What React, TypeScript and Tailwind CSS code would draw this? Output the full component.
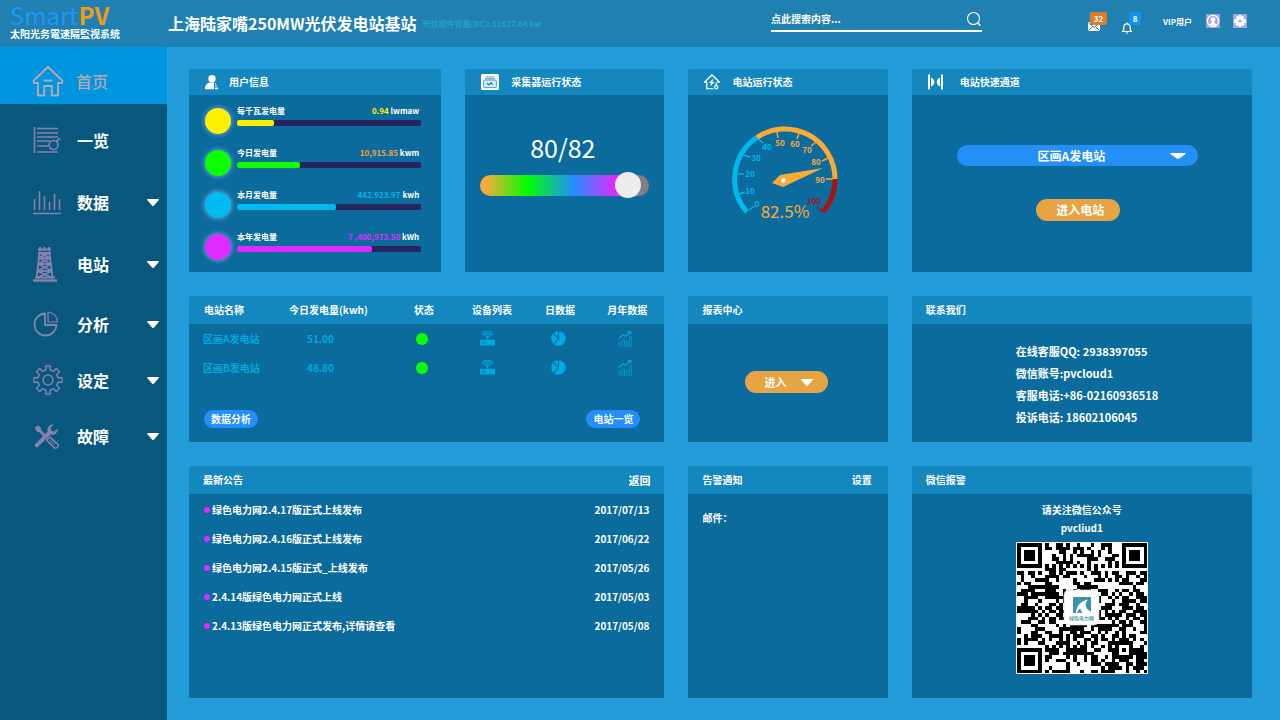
import { useState } from 'react';
import type { ReactNode } from 'react';

type IconProps = { className?: string };

function Caret({ className = '' }: IconProps) {
  return (
    <svg viewBox="0 0 12 7" preserveAspectRatio="none" className={`fill-current ${className}`} aria-hidden="true">
      <path d="M0 .8Q0 0 1 0h10Q12 0 12 .8L7 6.4Q6 7.4 5 6.4z" />
    </svg>
  );
}

function HomeIcon() {
  return (
    <svg viewBox="0 0 32 32" className="h-8 w-8" fill="none" stroke="currentColor" strokeWidth="2" strokeLinejoin="round">
      <path d="M6 18H1.8v-2.6L16 2l14.2 13.4V18H26v12.6h-6.2V21h-7.6v9.6H6z" />
      <path d="M12.5 15.5h7" strokeLinecap="round" />
    </svg>
  );
}

function ListIcon() {
  return (
    <svg viewBox="0 0 28 28" className="h-7 w-7" fill="none" stroke="currentColor" strokeWidth="1.6">
      <path d="M1.5 1v26M4 2.5h21M4 7h21M4 11h21M4 15h13M4 20h11M4 26h21" />
      <circle cx="20.5" cy="19" r="4.5" />
      <path d="M23.5 15.5l3.2-3" strokeWidth="2.2" />
    </svg>
  );
}

function BarsIcon() {
  return (
    <svg viewBox="0 0 28 26" className="h-[26px] w-7" fill="none" stroke="currentColor" strokeWidth="1.6">
      <path d="M1.5 10v11M6.5 2v19M11.5 7v14M16.5 13v8M21.5 5v16M26.5 10v11" />
      <path d="M0 24.5h28" />
    </svg>
  );
}

function TowerIcon() {
  return (
    <svg viewBox="0 0 24 36" className="h-9 w-6" fill="none" stroke="currentColor" strokeWidth="1.8">
      <path d="M5 3.5h13M7 1v4M11.5 1v4M16 1v4" strokeWidth="2" />
      <path d="M5 7h13" strokeWidth="2.4" />
      <path d="M6.5 7L3.6 32M16.5 7L19.6 32M5.6 12h12M5 18h13.4M4.4 25h15" />
      <path d="M6.5 7l11 5M16.5 7l-11 5M5.6 12l12.6 6M17.6 12L5 18M5 18l14 7M18.3 18L4.3 25M4.3 25l15.3 7M19.3 25L3.6 32" />
      <path d="M2 31.5h20" strokeWidth="2" />
      <path d="M0 34.5h24" strokeWidth="2.4" />
    </svg>
  );
}

function PieIcon() {
  return (
    <svg viewBox="0 0 26 26" className="h-[26px] w-[26px]" fill="none" stroke="currentColor" strokeWidth="1.8">
      <path d="M12 2.5A11 11 0 1 0 23.5 14H12z" />
      <path d="M15 1.2A10 10 0 0 1 24.6 11H15z" strokeWidth="1.2" />
    </svg>
  );
}

function GearIcon() {
  return (
    <svg viewBox="0 0 30 30" className="h-[30px] w-[30px]" fill="none" stroke="currentColor" strokeWidth="1.4">
      <path d="M12.8 1h4.4v4l3.2 1.3 2.9-2.8 3.2 3.2-2.8 2.9L25 12.8h4v4.4h-4l-1.3 3.2 2.8 2.9-3.2 3.2-2.9-2.8-3.2 1.3v4h-4.4v-4l-3.2-1.3-2.9 2.8-3.2-3.2 2.8-2.9L5 17.2H1v-4.4h4l1.3-3.2-2.8-2.9 3.2-3.2 2.9 2.8L12.8 5z" />
      <circle cx="15" cy="15" r="5" />
    </svg>
  );
}

function ToolsIcon() {
  return (
    <svg viewBox="0 0 26 26" className="h-[26px] w-[26px]" fill="none" stroke="currentColor">
      <path d="M20.8 1.6a5.2 5.2 0 0 0-6 7L2 21.2a2 2 0 0 0 2.8 2.8L17.6 11.4a5.2 5.2 0 0 0 7-6l-3.4 3-3-.6-.6-3z" fill="currentColor" stroke="none" />
      <path d="M1.6 4.8L5 2.2l3 2.6.2 2.4 5 5-2 2-5-5-2.2-.4z" fill="currentColor" stroke="none" />
      <path d="M13.6 17.2l3.2-3.2 7.6 6.8a2.3 2.3 0 0 1-3.4 3.6z" strokeWidth="1.5" />
      <path d="M16.5 17l5 5M18.2 16l4.6 4.4" strokeWidth="1" />
    </svg>
  );
}

function UserIcon() {
  return (
    <svg viewBox="0 0 14 15" className="h-[15px] w-3.5 fill-current">
      <circle cx="7" cy="3.8" r="3.7" />
      <path d="M0 14.2C0 10.4 2 8 5 7.6h4v6.6z" />
      <path d="M10 8.2h1v1h-1zM10 10.3h2v1h-2zM10 12.6h3.2v1.6H10z" />
    </svg>
  );
}

function CollectorIcon() {
  return (
    <svg viewBox="0 0 18 16" className="h-4 w-[18px]">
      <rect width="18" height="16" rx="1.6" fill="#fff" />
      <path d="M5 3h8M4 4.8h10" stroke="#4d9cc4" strokeWidth="1" />
      <rect x="2.6" y="6" width="12.8" height="7.6" rx="1.2" fill="#d7ebf5" stroke="#4d9cc4" />
      <path d="M6 9l2 2 2-2.4 1.6 2" fill="none" stroke="#1273a5" strokeWidth="1.1" />
    </svg>
  );
}

function StationIcon() {
  return (
    <svg viewBox="0 0 16 16" className="h-4 w-4" fill="none" stroke="currentColor" strokeWidth="1.3">
      <path d="M2.8 8H.8L8 1l7.2 7h-2M2.8 8v6.6h6.4" />
      <path d="M9.4 4.6L5 9h2.2l-1.2 3.6L10.8 8H8.4z" fill="currentColor" stroke="none" />
      <path d="M12.2 8.6v3.2" />
      <circle cx="12.2" cy="13.2" r="1.6" />
    </svg>
  );
}

function ChannelIcon() {
  return (
    <svg viewBox="0 0 15 16" className="h-4 w-[15px] fill-current">
      <path d="M0 .5h2v15H0zM13 .5h2v15h-2zM3 3.4c1.7.8 3.4 2.6 3.4 4.6s-1.7 3.8-3.4 4.6zM12 3.4C10 4.2 8.8 6 8.8 8s1.2 3.8 3.2 4.6z" />
    </svg>
  );
}

function RouterIcon() {
  return (
    <svg viewBox="0 0 15 15" className="h-[15px] w-[15px]" fill="none" stroke="currentColor" strokeWidth="1.2">
      <path d="M0 8.8h15v5.7H0z" fill="currentColor" stroke="none" />
      <path d="M1.8 11.6h1.2M4 11.6h1.2" stroke="#0c6b9d" strokeWidth="1.3" />
      <path d="M7.5 9V5M5.3 6.2a2.4 2.4 0 0 1 4.4 0M3.6 5a4.2 4.2 0 0 1 7.8 0M2 3.8a6 6 0 0 1 11 0" />
    </svg>
  );
}

function PieSolidIcon() {
  return (
    <svg viewBox="0 0 15 15" className="h-[15px] w-[15px]">
      <circle cx="7.5" cy="7.5" r="7.3" fill="currentColor" />
      <path d="M7.5 0v7.5L2.2 2.4M7.5 7.5L3 13" fill="none" stroke="#0c6b9d" strokeWidth="1.1" />
    </svg>
  );
}

function TrendIcon() {
  return (
    <svg viewBox="0 0 14 16" className="h-4 w-3.5" fill="none" stroke="currentColor" strokeWidth=".8">
      <path d="M1 7.5L5 3.5l2.4 2L12.6.8M9.8.7h3v2.6" strokeWidth="1.2" />
      <path d="M.8 16v-4.5h2V16M4.6 16V9h2v7M8 16v-5.5h2V16M11.4 16V5.5h2V16" opacity=".75" />
    </svg>
  );
}

const menu = [
  { label: '一览', icon: <ListIcon />, sub: false, space: 'mt-2' },
  { label: '数据', icon: <BarsIcon />, sub: true, space: 'mt-1.5' },
  { label: '电站', icon: <TowerIcon />, sub: true, space: 'mt-1.5' },
  { label: '分析', icon: <PieIcon />, sub: true, space: 'mt-1' },
  { label: '设定', icon: <GearIcon />, sub: true, space: '' },
  { label: '故障', icon: <ToolsIcon />, sub: true, space: '' },
];

const energy = [
  { label: '每千瓦发电量', value: '0.94', unit: 'lwmaw', percent: 20, bg: 'bg-[#fff000]', text: 'text-[#fff000]' },
  { label: '今日发电量', value: '10,915.85', unit: 'kwm', percent: 34, bg: 'bg-[#0cff00]', text: 'text-[#f2a23c]' },
  { label: '本月发电量', value: '442.923.97', unit: 'kwh', percent: 54, bg: 'bg-[#00bbf2]', text: 'text-[#00b4ea]' },
  { label: '本年发电量', value: '7 ,400,973.50', unit: 'kWh', percent: 73, bg: 'bg-[#df2bff]', text: 'text-[#df2bff]' },
];

const stations = [
  { name: '区画A发电站', today: '51.00' },
  { name: '区画B发电站', today: '48.80' },
];

const news = [
  { title: '绿色电力网2.4.17版正式上线发布', date: '2017/07/13' },
  { title: '绿色电力网2.4.16版正式上线发布', date: '2017/06/22' },
  { title: '绿色电力网2.4.15版正式_上线发布', date: '2017/05/26' },
  { title: '2.4.14版绿色电力网正式上线', date: '2017/05/03' },
  { title: '2.4.13版绿色电力网正式发布,详情请查看', date: '2017/05/08' },
];

type PanelProps = {
  title: string;
  icon?: ReactNode;
  iconBox?: string;
  action?: ReactNode;
  className?: string;
  children?: ReactNode;
};

function Panel({ title, icon, iconBox = '', action, className = '', children }: PanelProps) {
  return (
    <section className={`flex flex-col overflow-hidden rounded-t-[4px] bg-[#0c6b9d] ${className}`}>
      <header className={`flex items-center bg-[#1487bf] ${icon ? 'h-[26px] pl-4' : 'h-7 px-3.5'}`}>
        {icon && <span className={`flex shrink-0 ${iconBox}`}>{icon}</span>}
        <h2 className="font-bold text-[10px] leading-4">{title}</h2>
        {action}
      </header>
      {children}
    </section>
  );
}

const BLUE = '#00b7ee';
const ORANGE = '#fbab35';
const RED = '#a81510';

const ticks = [
  { n: 0, x: -28, y: 25, line: 'M-36 31L-30 27', color: BLUE },
  { n: 10, x: -35, y: 12, line: 'M-46 15L-40 13', color: BLUE },
  { n: 20, x: -35, y: -5, line: 'M-47 -5L-41 -5', color: BLUE },
  { n: 30, x: -29, y: -21, line: 'M-42 -24L-35 -22', color: BLUE },
  { n: 40, x: -18, y: -32, line: 'M-27 -40L-22 -36', color: BLUE },
  { n: 50, x: -5, y: -36, line: 'M-8 -47L-7 -41', color: ORANGE },
  { n: 60, x: 10, y: -35, line: 'M14 -46L12 -40', color: ORANGE },
  { n: 70, x: 22, y: -29, line: 'M31 -37L26 -33', color: ORANGE },
  { n: 80, x: 31, y: -17, line: 'M43 -21L37 -18', color: ORANGE },
  { n: 90, x: 35, y: 1, line: 'M48 0L41 0', color: ORANGE },
  { n: 100, x: 29, y: 22, line: 'M32 28L38 33', color: RED },
];

function Gauge() {
  return (
    <svg viewBox="-56 -56 112 100" className="h-[100px] w-28" role="img" aria-label="82.5%">
      <g fill="none" strokeWidth="5">
        <path d="M-38 33A50 50 0 0 1 -28 -41.5" stroke={BLUE} />
        <path d="M-28 -41.5A50 50 0 0 1 50 0" stroke={ORANGE} />
        <path d="M50 0A50 50 0 0 1 38 33" stroke={RED} />
      </g>
      {ticks.map((t) => (
        <g key={t.n}>
          <path d={t.line} stroke={t.color} strokeWidth="1.4" />
          <text x={t.x} y={t.y + 3} fill={t.color} textAnchor="middle" className="font-bold text-[8px]">
            {t.n}
          </text>
        </g>
      ))}
      <path d="M-13 4L-5 -4L38 -11L-2 8z" fill={ORANGE} />
      <circle cx="-1.5" cy="1.5" r="2.2" fill="#fff" />
      <text x="0" y="39" fill={ORANGE} textAnchor="middle" className="text-[17px]">
        82.5%
      </text>
    </svg>
  );
}

const SIZE = 37;

// value of a module inside a finder square, or null when outside of all three
function finder(x: number, y: number) {
  const corners = [[0, 0], [SIZE - 7, 0], [0, SIZE - 7]];
  for (const [cx, cy] of corners) {
    const d = Math.max(Math.abs(x - cx - 3), Math.abs(y - cy - 3));
    if (d <= 4) return d !== 2 && d !== 4;
  }
  return null;
}

function qrPath() {
  let seed = 20170713;
  let d = '';
  for (let y = 0; y < SIZE; y++) {
    for (let x = 0; x < SIZE; x++) {
      seed = (seed * 48271) % 2147483647;
      let on = (seed >> 8) % 100 < 51;
      const align = Math.max(Math.abs(x - 30), Math.abs(y - 30));
      if (align <= 2) on = align !== 1;
      if (x === 6 || y === 6) on = (x + y) % 2 === 0;
      on = finder(x, y) ?? on;
      if (on) d += `M${x} ${y}h1v1h-1z`;
    }
  }
  return d;
}

const qr = qrPath();

function QrCode() {
  return (
    <svg viewBox="0 0 132 132" className="mt-1 h-[132px] w-[132px]" role="img" aria-label="微信公众号二维码">
      <rect width="132" height="132" fill="#fff" />
      <path d={qr} transform="translate(1 1) scale(3.514)" fill="#000" shapeRendering="crispEdges" />
      <rect x="48" y="48" width="35" height="35" rx="5" fill="#fff" stroke="#d5dadd" strokeWidth=".7" />
      <rect x="57" y="55" width="18" height="16" fill="#3d93a8" />
      <path d="M60 71c0-7 5-12 12-13.5l-1.5 2c-2 4 0 8.5 4.5 10v1.5H67c-1.5-1-2.5-2.5-2.5-4.500-2 1-3 2.500-3.200 4.500z" fill="#fff" />
      <text x="65.5" y="78" textAnchor="middle" fill="#5d9fb2" className="font-bold text-[5px]">
        绿色电力网
      </text>
    </svg>
  );
}

function TopBar() {
  return (
    <header className="flex h-[47px] items-center bg-[#2080b2] pr-[33px]">
      <div className="w-[168px] shrink-0 pb-1 pl-2.5">
        <p className="text-2xl leading-6 text-[#1a9af5]">
          Smart<span className="font-bold text-[#f39a14]">PV</span>
        </p>
        <p className="whitespace-nowrap font-bold text-[10px] leading-[14px]">太阳光务電速隔監视系统</p>
      </div>
      <h1 className="mb-0.5 whitespace-nowrap font-bold text-base">上海陆家嘴250MW光伏发电站基站</h1>
      <span className="ml-1.5 whitespace-nowrap font-bold text-[8px] text-[#24a2cb]">光伏组件容量(DC): 11627.64 kw</span>
      <label className="mb-2 ml-auto flex h-6 w-[211px] items-center border-b-2 border-white">
        <input
          type="search"
          aria-label="搜索"
          placeholder="点此搜索内容..."
          className="min-w-0 flex-1 bg-transparent font-bold text-[10px] leading-4 outline-none placeholder:text-white placeholder:opacity-100"
        />
        <svg viewBox="0 0 16 16" className="h-4 w-4" fill="none" stroke="currentColor" strokeWidth="1.1">
          <circle cx="7.5" cy="7.5" r="6" />
          <path d="M11.8 11.8l2.4 2.6" strokeWidth="1.5" />
        </svg>
      </label>
      <div className="mb-1 ml-[106px] flex items-center">
        <button className="relative mt-2.5 h-[9px] w-3" aria-label="消息">
          <svg viewBox="0 0 12 9" className="h-[9px] w-3">
            <rect width="12" height="9" rx="1" fill="#fff" />
            <path d="M.5 1L6 5.4 11.5 1M.5 8.5l4-4M11.5 8.5l-4-4" fill="none" stroke="#2080b2" strokeWidth="1" />
          </svg>
          <span className="absolute bottom-1.5 left-0.5 h-[13px] w-[17px] rounded-[2px] bg-[#db7d24] text-center font-bold text-[8px] leading-[13px]">
            32
          </span>
        </button>
        <button className="relative mt-3 ml-[22px] h-3 w-2.5" aria-label="提醒">
          <svg viewBox="0 0 10 12" className="h-3 w-2.5" fill="none" stroke="currentColor" strokeWidth="1.2">
            <path d="M.6 9.5h8.8L8.2 7.8V5A3.2 3.2 0 0 0 1.8 5v2.8zM5 .4v1.4M3.8 11h2.4" />
          </svg>
          <span className="absolute bottom-[9px] left-[7px] h-[13px] w-3 rounded-[2px] bg-[#1493ee] text-center font-bold text-[8px] leading-[13px]">
            8
          </span>
        </button>
        <span className="ml-[31px] whitespace-nowrap font-bold text-[8px]">VIP用户</span>
        <button className="mb-0.5 ml-3.5 h-3.5 w-3.5" aria-label="用户">
          <svg viewBox="0 0 14 14" className="h-3.5 w-3.5">
            <rect width="14" height="14" fill="#a3a6dc" />
            <circle cx="7" cy="7" r="5.6" fill="none" stroke="#fff" strokeWidth="1.3" />
            <path d="M7 3.2a2.4 2.4 0 0 1 1.4 4.4l.2 1.4 2 1.2C9.5 12 4.5 12 3.4 10.2l2-1.2.2-1.4A2.4 2.4 0 0 1 7 3.2z" fill="#fff" />
          </svg>
        </button>
        <button className="mb-0.5 ml-[13px] h-3.5 w-3.5" aria-label="设置">
          <svg viewBox="0 0 14 14" className="h-3.5 w-3.5">
            <rect width="14" height="14" fill="#a3a6dc" />
            <path d="M5.8 1h2.4v1.8l1.3-1.2 2 1.9-1.3 1.5H13v4h-2.2l1 1.5-2 1.9-1.6-1.2V13H5.8v-1.8l-1.6 1.2-2-1.9 1-1.5H1V5h2.8L2.5 3.5l2-1.9 1.3 1.2z" fill="#fff" />
            <circle cx="7" cy="7" r="1.6" fill="#a3a6dc" />
          </svg>
        </button>
      </div>
    </header>
  );
}

function Sidebar() {
  return (
    <nav className="w-[167px] shrink-0 bg-[#09577d]">
      <a href="#home" className="flex h-[57px] items-center bg-[#0095e1] pt-2.5 pl-8 text-[#b3a8ad]">
        <span className="flex w-11">
          <HomeIcon />
        </span>
        <span className="font-medium text-base">首页</span>
      </a>
      {menu.map((item) => (
        <button key={item.label} className={`flex h-14 w-full items-center pr-2 pl-[33px] ${item.space}`}>
          <span className="flex w-11 text-[#8583ae]">{item.icon}</span>
          <span className="font-bold text-base">{item.label}</span>
          {item.sub && <Caret className="ml-auto h-[7px] w-3" />}
        </button>
      ))}
    </nav>
  );
}

export default function App() {
  const [online, setOnline] = useState(94);

  return (
    <div className="flex min-h-screen flex-col bg-[#219cd9] font-['Noto_Sans_CJK_SC','Noto_Sans',sans-serif] text-white">
      <TopBar />
      <div className="flex flex-1">
        <Sidebar />
        <main className="grid min-w-0 flex-1 grid-cols-[252fr_199fr_199fr_340fr] content-start gap-6 pt-[22px] pr-7 pb-5 pl-[22px]">
          <Panel title="用户信息" icon={<UserIcon />} iconBox="w-6" className="min-h-[203px]">
            <ul className="flex flex-col gap-3.5 pt-[11px] pr-5 pl-4">
              {energy.map((e) => (
                <li key={e.label} className="flex h-7 items-start gap-1.5">
                  <span className={`mt-0.5 h-[26px] w-[26px] shrink-0 rounded-full shadow-[0_0_4px_1px_#5f9ccb] ${e.bg}`} />
                  <div className="flex-1">
                    <div className="flex justify-between pr-0.5 font-bold text-[8px] leading-[10px]">
                      <span>{e.label}</span>
                      <span>
                        <span className={e.text}>{e.value}</span> {e.unit}
                      </span>
                    </div>
                    <div className="mt-1 h-1.5 rounded-[2px] bg-[#26245f]">
                      <div className={`h-full rounded-[2px] ${e.bg}`} style={{ width: `${e.percent}%` }} />
                    </div>
                  </div>
                </li>
              ))}
            </ul>
          </Panel>

          <Panel title="采集器运行状态" icon={<CollectorIcon />} iconBox="w-[30px]">
            <div className="flex flex-col items-center px-[15px] pt-9">
              <p className="pr-1 text-[25px] leading-8">80/82</p>
              <input
                type="range"
                aria-label="采集器运行状态"
                value={online}
                onChange={(ev) => setOnline(Number(ev.target.value))}
                className="mt-[9px] h-[26px] w-full appearance-none bg-transparent [&::-webkit-slider-runnable-track]:h-[21px] [&::-webkit-slider-runnable-track]:rounded-full [&::-webkit-slider-runnable-track]:bg-[linear-gradient(90deg,#fba93a_3%,#0f0_28%,#1e90ff_55%,#df2bff_80%,#808080_88%)] [&::-webkit-slider-thumb]:-mt-[3px] [&::-webkit-slider-thumb]:h-[26px] [&::-webkit-slider-thumb]:w-[26px] [&::-webkit-slider-thumb]:appearance-none [&::-webkit-slider-thumb]:rounded-full [&::-webkit-slider-thumb]:bg-[#ededed]"
              />
            </div>
          </Panel>

          <Panel title="电站运行状态" icon={<StationIcon />} iconBox="w-7">
            <div className="flex justify-center pt-7 pr-1.5">
              <Gauge />
            </div>
          </Panel>

          <Panel title="电站快速通道" icon={<ChannelIcon />} iconBox="w-8">
            <div className="flex flex-col items-center pt-[50px] pr-[54px] pl-[45px]">
              <div className="relative w-full">
                <select
                  aria-label="电站"
                  className="block h-[21px] w-full appearance-none rounded-full bg-[#2490f7] pr-3 text-center font-bold text-xs leading-[21px] [text-align-last:center]"
                >
                  <option>区画A发电站</option>
                  <option>区画B发电站</option>
                </select>
                <Caret className="pointer-events-none absolute top-2 right-3 h-1.5 w-4" />
              </div>
              <button className="mt-[33px] ml-0.5 h-[22px] rounded-full bg-[#e7a443] pr-4 pl-5 font-bold text-xs">
                进入电站
              </button>
            </div>
          </Panel>

          <section className="col-span-2 flex min-h-[146px] flex-col overflow-hidden rounded-t-[4px] bg-[#0c6b9d]">
            <table className="w-full table-fixed text-[10px]">
              <thead>
                <tr className="h-[28px] bg-[#1487bf] leading-4">
                  <th className="w-[78px] pl-[15px] text-left">电站名称</th>
                  <th className="w-[122px]">今日发电量(kwh)</th>
                  <th className="w-[68px]">状态</th>
                  <th className="w-[68px]">设备列表</th>
                  <th className="w-[68px]">日数据</th>
                  <th className="w-[70px] pr-1">月年数据</th>
                </tr>
              </thead>
              <tbody>
                {stations.map((s) => (
                  <tr key={s.name} className="h-[29px] text-center font-bold text-[#00a9df] leading-4">
                    <td className="whitespace-nowrap pl-3.5 text-left">{s.name}</td>
                    <td className="pr-4">{s.today}</td>
                    <td className="pr-1">
                      <span className="mx-auto block h-3 w-3 rounded-full bg-[#0cff00]" />
                    </td>
                    <td className="pr-2">
                      <a href="#devices" className="flex justify-center" aria-label="设备列表">
                        <RouterIcon />
                      </a>
                    </td>
                    <td className="pr-1">
                      <a href="#day" className="flex justify-center" aria-label="日数据">
                        <PieSolidIcon />
                      </a>
                    </td>
                    <td className="pr-2">
                      <a href="#month" className="flex justify-center" aria-label="月年数据">
                        <TrendIcon />
                      </a>
                    </td>
                  </tr>
                ))}
              </tbody>
            </table>
            <div className="mt-7 flex justify-between pr-6 pl-[15px] font-bold text-[10px] leading-[18px]">
              <button className="rounded-full bg-[#248ffc] px-[7px]">数据分析</button>
              <button className="rounded-full bg-[#248ffc] px-[7px]">电站一览</button>
            </div>
          </section>

          <Panel title="报表中心">
            <div className="flex justify-center pt-[47px] pr-1">
              <button className="flex h-[22px] items-center rounded-full bg-[#e7a443] pr-[15px] pl-5 font-bold text-[11px]">
                进入
                <Caret className="ml-3.5 h-[7px] w-3" />
              </button>
            </div>
          </Panel>

          <Panel title="联系我们">
            <address className="pt-4 pl-[104px] font-bold text-[11px] not-italic leading-[22px]">
              <p>在线客服QQ: 2938397055</p>
              <p>微信账号:pvcloud1</p>
              <p>客服电话:+86-02160936518</p>
              <p>投诉电话: 18602106045</p>
            </address>
          </Panel>

          <Panel
            title="最新公告"
            className="col-span-2 min-h-[232px]"
            action={
              <a href="#back" className="ml-auto font-bold text-[11px] leading-4">
                返回
              </a>
            }
          >
            <ul className="flex flex-col gap-[13px] px-[15px] pt-2 font-bold text-[10px] leading-4">
              {news.map((n) => (
                <li key={n.date} className="flex items-center">
                  <span className="mr-0.5 h-1.5 w-1.5 rounded-full bg-[#df2bff]" />
                  <a href="#news">{n.title}</a>
                  <time className="ml-auto">{n.date}</time>
                </li>
              ))}
            </ul>
          </Panel>

          <Panel
            title="告警通知"
            action={
              <button className="ml-auto pr-0.5 font-bold text-[10px] leading-4">设置</button>
            }
          >
            <p className="px-3.5 pt-4 font-bold text-[10px] leading-4">邮件：</p>
          </Panel>

          <Panel title="微信报警">
            <div className="flex flex-col items-center pt-2 font-bold text-[10px] leading-4">
              <p>请关注微信公众号</p>
              <p className="leading-5">pvcliud1</p>
              <QrCode />
            </div>
          </Panel>
        </main>
      </div>
    </div>
  );
}
